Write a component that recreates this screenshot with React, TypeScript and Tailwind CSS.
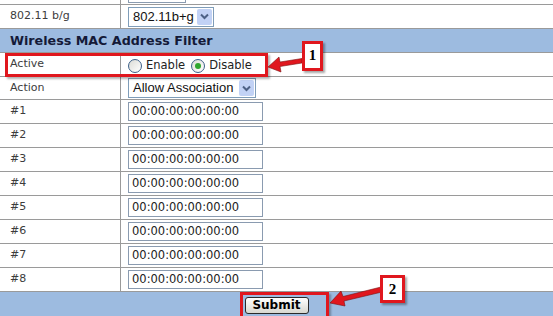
const macRows = ["#1", "#2", "#3", "#4", "#5", "#6", "#7", "#8"];

function Chevron() {
  return (
    <svg width="9" height="7" viewBox="0 0 9 7">
      <path d="M1 1.5 L4.5 5 L8 1.5" fill="none" stroke="#4d6185" strokeWidth="2" />
    </svg>
  );
}

function Select({ value, width }: { value: string; width: string }) {
  return (
    <div className={`flex h-[20px] items-stretch border border-[#7f9db9] bg-white ${width}`}>
      <div className="flex-1 pl-[4px] font-['Liberation_Sans'] text-[13px] leading-[18px] text-[#111]">{value}</div>
      <div className="m-[1px] flex w-[15px] items-center justify-center rounded-[2px] bg-[#c2d2f5]">
        <Chevron />
      </div>
    </div>
  );
}

function Radio({ checked }: { checked?: boolean }) {
  return (
    <span className="flex h-[14px] w-[14px] items-center justify-center rounded-full border border-[#3b5f88] bg-gradient-to-br from-[#dcdcd6] to-white">
      {checked && <span className="h-[6px] w-[6px] rounded-full bg-[#2fa62f]" />}
    </span>
  );
}

function Row({ label, children, h = "h-[24px]" }: { label: string; children?: React.ReactNode; h?: string }) {
  return (
    <div className={`flex ${h} border-b border-[#9a9a9a]`}>
      <div className="flex w-[121px] items-center border-r border-[#9a9a9a] pl-[10px] text-[11px] text-[#3c3c3c]">{label}</div>
      <div className="flex flex-1 items-center pl-[7px]">{children}</div>
    </div>
  );
}

function Callout({ n, className }: { n: string; className: string }) {
  return (
    <div className={`absolute flex justify-center border-[3px] border-[#e0171e] bg-white pt-[3px] font-['Liberation_Serif'] text-[15px] font-bold leading-[16px] text-black shadow-[2px_2px_2px_rgba(0,0,0,0.35)] ${className}`}>
      {n}
    </div>
  );
}

export default function App() {
  return (
    <div className="relative h-[316px] w-[553px] overflow-hidden bg-white font-['DejaVu_Sans',sans-serif]">
      <div className="flex h-[5px] border-b border-[#9a9a9a]">
        <div className="w-[121px] border-r border-[#9a9a9a]" />
        <div className="pl-[7px]">
          <div className="h-[3px] w-[58px] border-x border-b border-[#8a9bb0]" />
        </div>
      </div>
      <Row label="802.11 b/g">
        <Select value="802.11b+g" width="w-[86px]" />
      </Row>
      <div className="flex h-[24px] items-center border-b border-[#9a9a9a] bg-[#9dbbe0] pl-[10px] text-[12.7px] font-bold text-[#141a38]">
        Wireless MAC Address Filter
      </div>
      <Row label="Active">
        <div className="mt-[2px] flex items-center gap-[4px] text-[11.5px] text-[#222]">
          <Radio />
          <span className="mr-[2px]">Enable</span>
          <Radio checked />
          <span>Disable</span>
        </div>
      </Row>
      <Row label="Action" h="h-[23px]">
        <Select value="Allow Association" width="w-[128px]" />
      </Row>
      {macRows.map((r) => (
        <Row key={r} label={r}>
          <div className="h-[19px] w-[135px] border border-[#8a9bb0] pl-[3px] text-[11.5px] leading-[17px] text-[#222]">
            00:00:00:00:00:00
          </div>
        </Row>
      ))}
      <div className="flex h-[24px] items-center justify-center bg-[#9dbbe0]">
        <button className="mt-[2px] h-[17px] w-[64px] rounded-[3px] border border-[#2a2a2a] bg-gradient-to-b from-white to-[#d8d8d0] text-[12px] font-bold leading-[14px] text-black">
          Submit
        </button>
      </div>

      {/* annotations */}
      <div className="absolute left-[5px] top-[53px] h-[24px] w-[263px] border-[3px] border-[#e0171e] shadow-[2px_2px_2px_rgba(0,0,0,0.3)]" />
      <div className="absolute left-[240px] top-[292px] h-[30px] w-[89px] border-[3px] border-[#e0171e] shadow-[2px_2px_2px_rgba(0,0,0,0.3)]" />
      <svg className="absolute left-0 top-0" width="553" height="316" viewBox="0 0 553 316">
        <g fill="#e0171e" stroke="#7a1010" strokeWidth="0.6">
          <polygon points="302,58.5 280,62 279,57 268,67 281,72 280,66.5 302,63" />
          <polygon points="381,287 343,296.5 341,291 330,303 345,306 344,301 382,292" />
        </g>
      </svg>
      <Callout n="1" className="left-[302px] top-[41px] h-[30px] w-[21px]" />
      <Callout n="2" className="left-[380px] top-[275px] h-[28px] w-[25px]" />
    </div>
  );
}
